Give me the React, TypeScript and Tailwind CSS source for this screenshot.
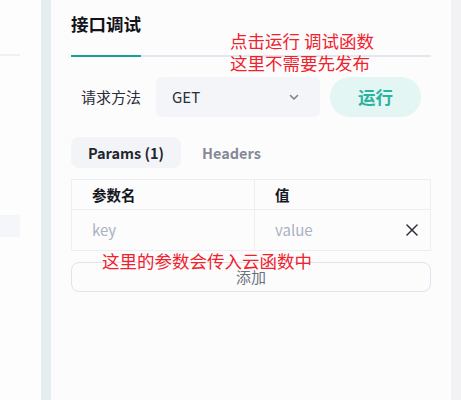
import React from 'react'

const FONT = { fontFamily: '"Noto Sans CJK SC", "Noto Sans", sans-serif' }

// small down chevron for the method select
function ChevronIcon(): React.ReactElement {
  return (
    <svg width="12" height="12" viewBox="0 0 12 12" fill="none" stroke="#7c8190" strokeWidth="1.6" strokeLinecap="round" strokeLinejoin="round" aria-hidden="true">
      <polyline points="2.5 4.5 6 8 9.5 4.5" />
    </svg>
  )
}

function CloseIcon(): React.ReactElement {
  return (
    <svg width="12" height="12" viewBox="0 0 12 12" fill="none" stroke="#2a2f3a" strokeWidth="1.5" strokeLinecap="round" aria-hidden="true">
      <line x1="1" y1="1" x2="11" y2="11" />
      <line x1="11" y1="1" x2="1" y2="11" />
    </svg>
  )
}

export default function App(): React.ReactElement {
  return (
    <div className="flex h-[400px] w-[461px] overflow-hidden bg-[#fdfdfe]" style={FONT}>
      {/* left list (cut off) */}
      <div className="flex w-[41px] flex-col">
        <div className="mt-[54px] h-[2px] w-[20px] bg-[#f0f1f4]" />
        <div className="mt-[159px] h-[22px] w-[20px] bg-[#f4f6f9]" />
      </div>

      {/* divider strip */}
      <div className="w-[10px] bg-[#e4edf0]" />

      {/* debug panel */}
      <div className="relative w-[400px] bg-[#fdfcfd] px-5">
        {/* tab header */}
        <div className="flex border-b-2 border-[#e4e7ee]">
          <div className="-mb-[2px] border-b-2 border-[#13a394] pt-[11px] pb-[18px]">
            <div className="text-[17.5px] font-bold leading-[26px] text-[#111318]">接口调试</div>
          </div>
        </div>

        {/* method row */}
        <div className="mt-5 flex h-[40px] items-center">
          <div className="w-[85px] pl-[10px] text-[15px] text-[#2a2e36]">请求方法</div>
          <div className="flex h-[40px] w-[164px] items-center justify-between rounded-md bg-[#f4f5f8] pl-4 pr-5">
            <span className="text-[15px] text-[#2a2e36]">GET</span>
            <ChevronIcon />
          </div>
          <button type="button" className="ml-[10px] h-[40px] w-[91px] rounded-full bg-[#e3f6f3] text-[17.5px] font-bold text-[#2cb3a0]">
            运行
          </button>
        </div>

        {/* request tabs */}
        <div className="mt-5 flex h-[31px] items-center">
          <div className="flex h-[31px] w-[110px] items-center justify-center rounded-lg bg-[#f3f4f7] text-[14.5px] font-semibold text-[#22262e]">
            Params (1)
          </div>
          <div className="ml-[21px] text-[14.5px] font-semibold text-[#858a96]">Headers</div>
        </div>

        {/* params table */}
        <div className="mt-[11px] border border-[#eceef2]">
          <div className="flex h-[30px] items-center border-b border-[#eceef2]">
            <div className="flex h-full w-[183px] items-center border-r border-[#eceef2] pl-5 text-[14.5px] font-bold text-[#15181e]">参数名</div>
            <div className="pl-5 text-[14.5px] font-bold text-[#15181e]">值</div>
          </div>
          <div className="flex h-[40px] items-center">
            <div className="flex h-full w-[183px] items-center border-r border-[#eceef2] pl-5 text-[15px] text-[#a8b2c2]">key</div>
            <div className="flex flex-1 items-center justify-between pl-5 pr-[12px] text-[15px] text-[#a8b2c2]">
              <span>value</span>
              <CloseIcon />
            </div>
          </div>
        </div>

        {/* add row */}
        <button type="button" className="mt-[11px] flex h-[30px] w-full items-center justify-center rounded-lg border border-[#dfe3ec] text-[15px] text-[#6a7282]">
          添加
        </button>

        {/* red annotations drawn over the panel */}
        <div className="pointer-events-none absolute left-[179px] top-[30px] text-[17.5px] leading-[22px] text-[#f0222c]">
          <div>点击运行 调试函数</div>
          <div>这里不需要先发布</div>
        </div>
        <div className="pointer-events-none absolute left-[51px] top-[250px] text-[17.5px] leading-[22px] text-[#f0222c]">
          这里的参数会传入云函数中
        </div>
      </div>

      {/* right edge */}
      <div className="w-[10px] bg-[#f2f2f5]" />
    </div>
  )
}
